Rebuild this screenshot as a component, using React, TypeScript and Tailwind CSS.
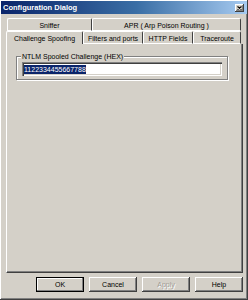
import React from "react";

const raised =
  "shadow-[inset_-1px_-1px_0_#404040,inset_1px_1px_0_#ffffff,inset_-2px_-2px_0_#808080,inset_2px_2px_0_#d4d0c8]";

function Tab({ label, w, selected = false }: { label: string; w: string; selected?: boolean }) {
  return (
    <div
      className={`${w} h-full flex items-center justify-center border-l border-t border-white border-r border-r-[#404040] rounded-t-[2px] ${
        selected ? "" : "border-b border-b-white"
      } relative`}
    >
      <span className="text-[7px] leading-none text-black pt-[1px]">{label}</span>
    </div>
  );
}

function Btn({ label, def = false, disabled = false }: { label: string; def?: boolean; disabled?: boolean }) {
  return (
    <div
      className={`w-[48px] h-[15px] flex items-center justify-center bg-[#d4d0c8] ${
        def
          ? "border border-black shadow-[inset_-1px_-1px_0_#808080,inset_1px_1px_0_#ffffff]"
          : raised
      }`}
    >
      <span
        className={`text-[7px] leading-none ${
          disabled ? "text-[#a09c94] [text-shadow:1px_1px_0_#ffffff]" : "text-black"
        }`}
      >
        {label}
      </span>
    </div>
  );
}

export default function App() {
  return (
    <div
      className={`w-[248px] h-[300px] bg-[#d4d0c8] flex flex-col p-[1px] ${raised}`}
      style={{ fontFamily: '"Liberation Sans", Arial, sans-serif' }}
    >
      {/* title bar */}
      <div className="h-[13px] w-full flex items-center justify-between px-[2px] bg-[linear-gradient(90deg,#0a246a_0%,#3a6ea5_55%,#a6caf0_100%)]">
        <span className="text-[7.5px] font-bold text-white leading-none">Configuration Dialog</span>
        <div className={`w-[9px] h-[8px] mr-[1px] flex items-center justify-center bg-[#d4d0c8] ${raised}`}>
          <svg width="5" height="4" viewBox="0 0 5 4">
            <path d="M0.5 0.5 L4.5 3.5 M4.5 0.5 L0.5 3.5" stroke="#000" strokeWidth="1.1" />
          </svg>
        </div>
      </div>

      {/* tabs + panel */}
      <div className="ml-[5px] mt-[4px] w-[237px] flex flex-col">
        <div className="h-[13px] flex pl-[1px]">
          <Tab label="Sniffer" w="w-[85px]" />
          <Tab label="APR ( Arp Poison Routing )" w="w-[149px]" />
        </div>
        <div className="h-[13px] flex">
          <Tab label="Challenge Spoofing" w="w-[77px]" selected />
          <Tab label="Filters and ports" w="w-[60px]" />
          <Tab label="HTTP Fields" w="w-[50px]" />
          <Tab label="Traceroute" w="w-[48px]" />
        </div>
        <div className="h-[229px] border-l border-white border-r border-r-[#404040] border-b border-b-[#404040] shadow-[inset_-1px_-1px_0_#808080] pl-[9px] pt-[12px] flex flex-col">
          {/* group box */}
          <div className="relative w-[212px] h-[24px] border border-[#808080] shadow-[1px_1px_0_#ffffff,inset_1px_1px_0_#ffffff] px-[5px] pt-[5px]">
            <span className="absolute left-[4px] top-[-5px] bg-[#d4d0c8] px-[1px] text-[7px] leading-[9px] text-black">
              NTLM Spooled Challenge (HEX)
            </span>
            <div className="w-[200px] h-[14px] bg-white shadow-[inset_1px_1px_0_#808080,inset_2px_2px_0_#404040,inset_-1px_-1px_0_#ffffff,inset_-2px_-2px_0_#d4d0c8] flex items-center pl-[2px]">
              <span className="bg-[#0a246a] text-white text-[7px] leading-[9px] px-[0px]">1122334455667788</span>
            </div>
          </div>
        </div>
      </div>

      {/* buttons */}
      <div className="mt-[4px] flex justify-end gap-[5px] pr-[4px]">
        <Btn label="OK" def />
        <Btn label="Cancel" />
        <Btn label="Apply" disabled />
        <Btn label="Help" />
      </div>
    </div>
  );
}
